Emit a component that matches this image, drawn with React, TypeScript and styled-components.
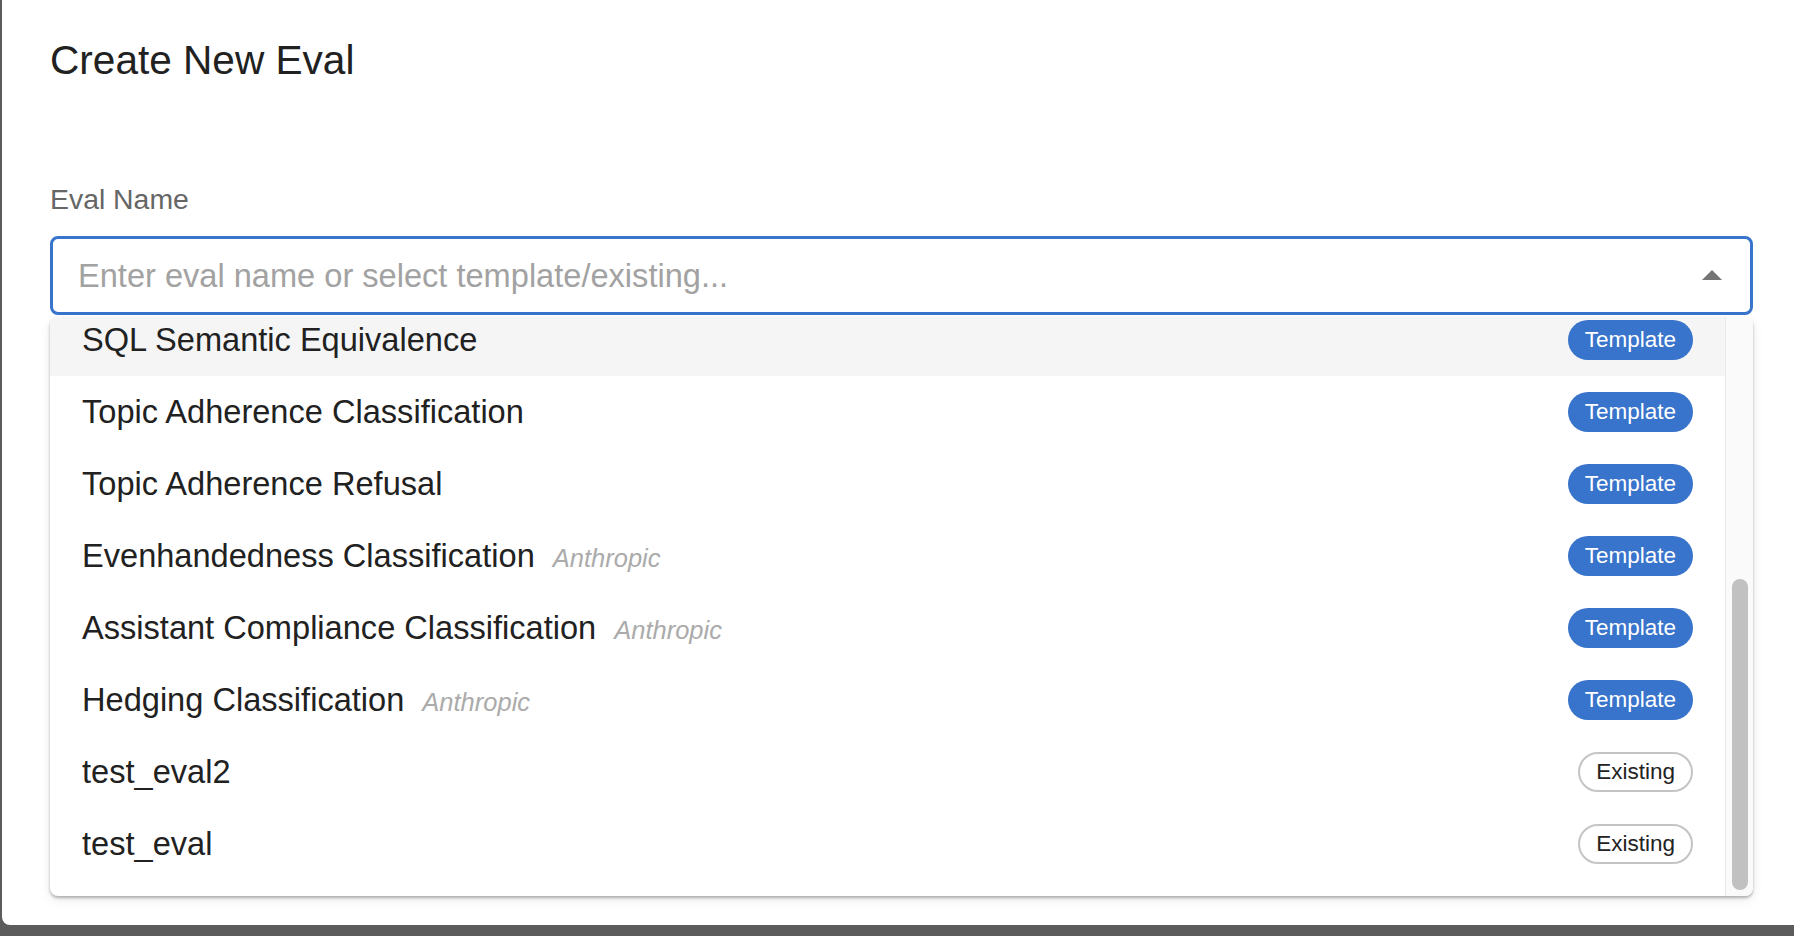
import React, { useLayoutEffect, useRef } from "react";
import styled, { createGlobalStyle, css } from "styled-components";

const GlobalStyle = createGlobalStyle`
  html, body {
    margin: 0;
    padding: 0;
    background: #5c5c5c;
    overflow: hidden;
  }
  body {
    font-family: "Liberation Sans", Arial, Helvetica, sans-serif;
  }
  #root {
    height: 936px;
  }
`;

const Page = styled.div`
  display: flex;
  height: 936px;
  padding-left: 2px;
  box-sizing: border-box;
`;

const Dialog = styled.div`
  flex: 1;
  height: 925px;
  background: #ffffff;
  border-bottom-left-radius: 8px;
  padding: 28px 41px 0 48px;
  box-sizing: border-box;
  display: flex;
  flex-direction: column;
`;

const Title = styled.h2`
  margin: 0;
  font-size: 40.6px;
  line-height: 64px;
  font-weight: 400;
  color: #212121;
`;

const Field = styled.div`
  margin-top: 86px;
  display: flex;
  flex-direction: column;
`;

const Label = styled.label`
  font-size: 28.4px;
  line-height: 42px;
  color: #666666;
  margin-bottom: 16px;
`;

const InputWrap = styled.div`
  position: relative;
`;

const InputBox = styled.div`
  height: 79px;
  box-sizing: border-box;
  border: 3px solid #3874cb;
  border-radius: 8px;
  display: flex;
  align-items: center;
  padding: 0 14px 0 25px;
`;

const TextInput = styled.input`
  flex: 1;
  border: none;
  outline: none;
  background: transparent;
  font-family: inherit;
  font-size: 32.6px;
  color: #212121;
  padding: 0;
  &::placeholder {
    color: #a2a2a2;
  }
`;

const ArrowIcon = styled.svg`
  width: 48px;
  height: 48px;
  flex: none;
  fill: #757575;
`;

const Popup = styled.div`
  position: absolute;
  top: calc(100% + 2px);
  left: 0;
  right: 0;
  height: 579px;
  display: flex;
  background: #ffffff;
  border-radius: 8px;
  overflow: hidden;
  box-shadow: 0 2px 3px rgba(0, 0, 0, 0.28), 0 4px 12px rgba(0, 0, 0, 0.08);
`;

const List = styled.ul`
  flex: 1;
  margin: 0;
  padding: 16px 0;
  list-style: none;
  height: 100%;
  box-sizing: border-box;
  overflow: hidden;
`;

const ScrollTrack = styled.div`
  flex: none;
  width: 28px;
  box-sizing: border-box;
  background: #fafafa;
  border-left: 1px solid #e9e9e9;
  padding: 262px 5px 0 6px;
`;

const ScrollThumb = styled.div`
  height: 311px;
  border-radius: 8px;
  background: #c1c1c1;
`;

const Item = styled.li<{ $active?: boolean }>`
  height: 72px;
  box-sizing: border-box;
  display: flex;
  align-items: center;
  justify-content: space-between;
  padding: 0 32px;
  background: ${(p) => (p.$active ? "#f5f5f5" : "transparent")};
`;

const NameGroup = styled.div`
  display: flex;
  align-items: baseline;
  gap: 18px;
`;

const Name = styled.span`
  font-size: 32.6px;
  color: #212121;
`;

const Source = styled.span`
  font-size: 25.5px;
  font-style: italic;
  color: #ababab;
`;

const Chip = styled.span<{ $variant: "filled" | "outlined" }>`
  display: inline-flex;
  align-items: center;
  height: 40px;
  box-sizing: border-box;
  border-radius: 20px;
  font-size: 22.5px;
  white-space: nowrap;
  ${(p) =>
    p.$variant === "filled"
      ? css`
          background: #3874cb;
          color: #ffffff;
          padding: 0 17px;
        `
      : css`
          background: #ffffff;
          color: #222222;
          border: 2px solid #c4c4c4;
          padding: 0 16px;
        `}
`;

type Option = {
  name: string;
  kind: "Template" | "Existing";
  source?: string;
};

const options: Option[] = [
  { name: "Answer Relevance", kind: "Template" },
  { name: "Context Faithfulness", kind: "Template" },
  { name: "Factual Accuracy", kind: "Template" },
  { name: "Hallucination Detection", kind: "Template" },
  { name: "Toxicity Classification", kind: "Template" },
  { name: "SQL Syntax Validity", kind: "Template" },
  { name: "SQL Semantic Equivalence", kind: "Template" },
  { name: "Topic Adherence Classification", kind: "Template" },
  { name: "Topic Adherence Refusal", kind: "Template" },
  { name: "Evenhandedness Classification", kind: "Template", source: "Anthropic" },
  { name: "Assistant Compliance Classification", kind: "Template", source: "Anthropic" },
  { name: "Hedging Classification", kind: "Template", source: "Anthropic" },
  { name: "test_eval2", kind: "Existing" },
  { name: "test_eval", kind: "Existing" },
];

export default function App() {
  const listRef = useRef<HTMLUListElement>(null);

  useLayoutEffect(() => {
    const el = listRef.current;
    if (el) el.scrollTop = el.scrollHeight;
  }, []);

  return (
    <>
      <GlobalStyle />
      <Page>
        <Dialog>
          <Title>Create New Eval</Title>
          <Field>
            <Label>Eval Name</Label>
            <InputWrap>
              <InputBox>
                <TextInput placeholder="Enter eval name or select template/existing..." />
                <ArrowIcon viewBox="0 0 24 24" aria-hidden="true">
                  <path d="M7 14l5-5 5 5z" />
                </ArrowIcon>
              </InputBox>
              <Popup>
                <List ref={listRef}>
                  {options.map((o) => (
                    <Item key={o.name} $active={o.name === "SQL Semantic Equivalence"}>
                      <NameGroup>
                        <Name>{o.name}</Name>
                        {o.source && <Source>{o.source}</Source>}
                      </NameGroup>
                      <Chip $variant={o.kind === "Template" ? "filled" : "outlined"}>
                        {o.kind}
                      </Chip>
                    </Item>
                  ))}
                </List>
                <ScrollTrack>
                  <ScrollThumb />
                </ScrollTrack>
              </Popup>
            </InputWrap>
          </Field>
        </Dialog>
      </Page>
    </>
  );
}
